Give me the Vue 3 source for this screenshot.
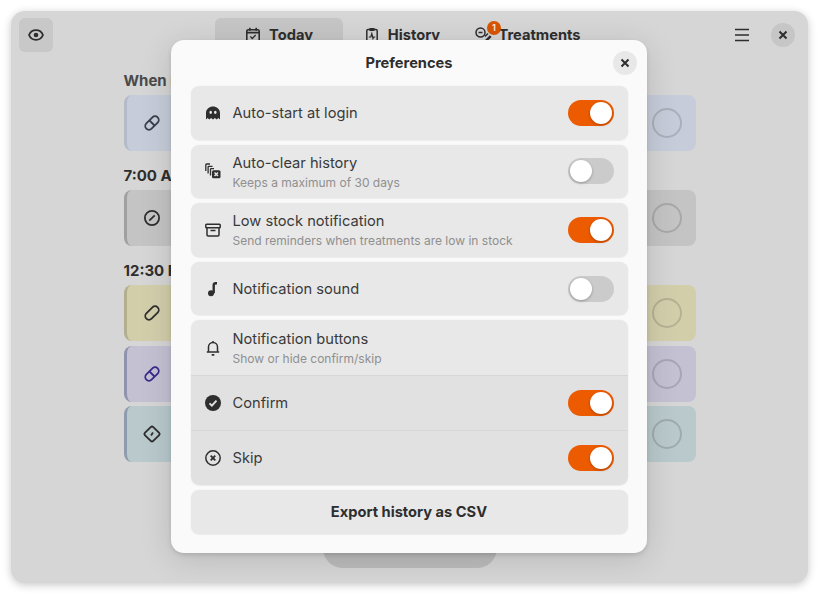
<template>
  <div class="page">
    <div class="window">
      <header class="header">
        <button class="icon-btn eye">
          <svg width="16" height="16" viewBox="0 0 16 16" fill="none">
            <path d="M8 3.2C4.6 3.2 2 5.6 1 8c1 2.4 3.6 4.8 7 4.8s6-2.4 7-4.8c-1-2.4-3.600-4.800-7-4.800z" stroke="#2e2e2e" stroke-width="1.8"/>
            <circle cx="8" cy="8" r="2.300" fill="#2e2e2e"/>
          </svg>
        </button>
        <nav class="tabs">
          <div class="tab active">
            <svg width="16" height="16" viewBox="0 0 16 16" fill="none" stroke="#2e2e2e" stroke-width="1.6">
              <rect x="1.800" y="2.800" width="12.400" height="11.900" rx="1.500"/>
              <path d="M1.800 5.600h12.400M4.800 .8v3M11.200 .8v3"/>
              <path d="M5.300 9.500l2 2 3.400-3.500" stroke-width="1.300"/>
            </svg>
            <span>Today</span>
          </div>
          <div class="tab">
            <svg width="16" height="16" viewBox="0 0 16 16" fill="none" stroke="#2e2e2e" stroke-width="1.500">
              <rect x="2.800" y="2.500" width="10.400" height="12.500" rx="1.300"/>
              <path d="M5.500 1h5v3h-5z" fill="#2e2e2e" stroke="none"/>
              <path d="M4.800 10h2l1-3.500 1.200 5 .8-1.500h1.500" stroke-width="1.200"/>
            </svg>
            <span>History</span>
          </div>
          <div class="tab treat">
            <svg width="20" height="16" viewBox="0 0 20 16" fill="none" stroke="#2e2e2e" stroke-width="1.500">
              <circle cx="5.500" cy="5.500" r="4.500"/>
              <path d="M3.500 5.500h4"/>
              <path d="M10 9.500l3-3M13 12.500l3-3"/>
              <path d="M10.500 14l5-5" stroke-width="2"/>
            </svg>
            <span>Treatments</span>
            <i class="badge">1</i>
          </div>
        </nav>
        <div class="header-right">
          <svg class="menu" width="16" height="16" viewBox="0 0 16 16" fill="none" stroke="#2e2e2e" stroke-width="1.700">
            <path d="M1 2.500h14M1 8h14M1 13.500h14"/>
          </svg>
          <button class="round-btn dark">
            <svg width="10" height="10" viewBox="0 0 10 10" fill="none" stroke="#2e2e2e" stroke-width="2">
              <path d="M1.500 1.500l7 7M8.500 1.500l-7 7"/>
            </svg>
          </button>
        </div>
      </header>

      <main class="list">
        <section v-for="group in groups" :key="group.title" class="group">
          <h3>{{ group.title }}</h3>
          <div class="cards">
            <div v-for="card in group.cards" :key="card.name" class="card" :class="card.tone">
              <svg class="card-icon" width="18" height="18" viewBox="0 0 18 18" fill="none" :stroke="card.stroke" stroke-width="1.800">
                <template v-if="card.icon === 'pill' || card.icon === 'capsule'">
                  <rect x="5.300" y="1" width="7.400" height="16" rx="3.700" transform="rotate(45 9 9)"/>
                  <path v-if="card.icon === 'pill'" d="M6.500 6.500l5 5"/>
                </template>
                <template v-else-if="card.icon === 'ban'">
                  <circle cx="9" cy="9" r="7.100"/>
                  <path d="M11.700 6.300l-5.400 5.400"/>
                </template>
                <template v-else>
                  <rect x="3.200" y="3.200" width="11.600" height="11.600" rx="1.800" transform="rotate(45 9 9)"/>
                  <path d="M10 7.500l-2 3"/>
                </template>
              </svg>
              <div class="card-text">
                <div class="card-name">{{ card.name }}</div>
                <div class="card-sub">{{ card.sub }}</div>
              </div>
              <span class="check"></span>
            </div>
          </div>
        </section>
      </main>

      <div class="fab"></div>

      <div class="dialog">
        <div class="dialog-head">
          <h2>Preferences</h2>
          <button class="round-btn close">
            <svg width="10" height="10" viewBox="0 0 10 10" fill="none" stroke="#2e2e2e" stroke-width="2">
              <path d="M1.500 1.500l7 7M8.500 1.500l-7 7"/>
            </svg>
          </button>
        </div>

        <div class="rows">
          <div v-for="row in rows" :key="row.title" class="row">
            <span class="row-icon" v-html="icons[row.icon]"></span>
            <div class="row-text">
              <div class="row-title">{{ row.title }}</div>
              <div v-if="row.sub" class="row-sub">{{ row.sub }}</div>
            </div>
            <span class="switch" :class="{ on: row.on }"><i></i></span>
          </div>

          <div class="row-group">
            <div class="row plain">
              <span class="row-icon" v-html="icons.bell"></span>
              <div class="row-text">
                <div class="row-title">Notification buttons</div>
                <div class="row-sub">Show or hide confirm/skip</div>
              </div>
            </div>
            <div v-for="row in subRows" :key="row.title" class="row plain sub">
              <span class="row-icon" v-html="icons[row.icon]"></span>
              <div class="row-text">
                <div class="row-title">{{ row.title }}</div>
              </div>
              <span class="switch on"><i></i></span>
            </div>
          </div>

          <button class="export">Export history as CSV</button>
        </div>
      </div>
    </div>
  </div>
</template>

<script setup>
const groups = [
  {
    title: 'When needed',
    cards: [{ name: 'Aspirin', sub: '1 pill', tone: 'blue', icon: 'pill', stroke: '#3a3d4a' }]
  },
  {
    title: '7:00 AM',
    cards: [{ name: 'Ibuprofen', sub: '1 tablet', tone: 'gray', icon: 'ban', stroke: '#2e2e2e' }]
  },
  {
    title: '12:30 PM',
    cards: [
      { name: 'Omega 3', sub: '1 capsule', tone: 'yellow', icon: 'capsule', stroke: '#2e2e2e' },
      { name: 'Vitamin B', sub: '1 pill', tone: 'purple', icon: 'pill', stroke: '#3a2a8c' },
      { name: 'Vitamin C', sub: '1 tablet', tone: 'teal', icon: 'diamond', stroke: '#2e2e2e' }
    ]
  }
]

const rows = [
  { title: 'Auto-start at login', icon: 'ghost', on: true },
  { title: 'Auto-clear history', sub: 'Keeps a maximum of 30 days', icon: 'clear', on: false },
  { title: 'Low stock notification', sub: 'Send reminders when treatments are low in stock', icon: 'archive', on: true },
  { title: 'Notification sound', icon: 'note', on: false }
]

const subRows = [
  { title: 'Confirm', icon: 'check' },
  { title: 'Skip', icon: 'skip' }
]

const icons = {
  ghost: '<svg width="16" height="16" viewBox="0 0 16 16"><path fill="#2e2e2e" fill-rule="evenodd" d="M8 1.500C4.500 1.500 1 4 1 8v6.500l1.600-1.500 1.700 1.500L6.100 13l1.900 1.500L9.900 13l1.800 1.500 1.700-1.500 1.600 1.500V8c0-4-3.500-6.500-7-6.500zM5.700 5.700a1.300 1.600 0 1 0 0 3.200 1.300 1.600 0 0 0 0-3.200zm4.600 0a1.300 1.600 0 1 0 0 3.200 1.300 1.600 0 0 0 0-3.200z"/></svg>',
  clear: '<svg width="16" height="16" viewBox="0 0 16 16" fill="none" stroke="#2e2e2e" stroke-width="1.300"><path d="M5 1H1.500a.7.700 0 0 0-.7.700V8"/><path d="M7.500 3.300H3.800a.7.700 0 0 0-.7.700v6.500"/><path d="M5.500 12.500V6.300c0-.4.300-.7.700-.7H9"/><rect x="7" y="7.300" width="8.500" height="8" rx="1.500" fill="#2e2e2e" stroke="none"/><path d="M9.500 9.500l3.500 3.600M13 9.500l-3.500 3.600" stroke="#e8e8e8" stroke-width="1.400"/></svg>',
  archive: '<svg width="16" height="16" viewBox="0 0 16 16" fill="none" stroke="#2e2e2e" stroke-width="1.500"><rect x=".8" y="2.200" width="14.400" height="3.600" rx=".8"/><path d="M2 5.800v7c0 .7.500 1.200 1.200 1.200h9.600c.7 0 1.200-.5 1.200-1.200v-7"/><path d="M5.500 8.500h5"/></svg>',
  note: '<svg width="16" height="16" viewBox="0 0 16 16"><circle cx="6" cy="12.300" r="3" fill="#2e2e2e"/><path d="M7.500 12.300V4c0-1.800 1.200-3 3-3H12v2.600h-1.200c-.5 0-.9.400-.9.900v7.800z" fill="#2e2e2e"/></svg>',
  bell: '<svg width="16" height="16" viewBox="0 0 16 16" fill="none" stroke="#2e2e2e" stroke-width="1.500"><path d="M3.500 11.700V7a4.500 4.500 0 0 1 9 0v4.700"/><path d="M1.800 12h12.400"/><path d="M8 1v1.500"/><path d="M6.700 14.800h2.600" stroke-width="1.700"/></svg>',
  check: '<svg width="16" height="16" viewBox="0 0 16 16"><circle cx="8" cy="8" r="8" fill="#2e2e2e"/><path d="M4.500 8.300l2.400 2.400 4.600-5" fill="none" stroke="#e2e2e2" stroke-width="1.900"/></svg>',
  skip: '<svg width="16" height="16" viewBox="0 0 16 16" fill="none" stroke="#2e2e2e"><circle cx="8" cy="8" r="7.200" stroke-width="1.500"/><path d="M5.700 5.700l4.600 4.600M10.300 5.700l-4.600 4.600" stroke-width="1.800"/></svg>'
}
</script>

<style scoped>
.page {
  width: 819px;
  height: 595px;
  padding: 11px;
  box-sizing: border-box;
  background: #fff;
  font-family: Inter, "Liberation Sans", sans-serif;
  color: #2e2e2e;
  overflow: hidden;
}

.window {
  position: relative;
  width: 797px;
  height: 572px;
  background: #d6d6d6;
  border-radius: 14px;
  box-shadow: 0 2px 8px rgba(0, 0, 0, 0.22);
  overflow: hidden;
}

button {
  border: 0;
  padding: 0;
  font: inherit;
  color: inherit;
  display: flex;
  align-items: center;
  justify-content: center;
}

.header {
  height: 48px;
  display: flex;
  align-items: flex-start;
  padding: 7px 13px 0 8px;
  box-sizing: border-box;
}

.icon-btn.eye {
  width: 34px;
  height: 34px;
  border-radius: 6px;
  background: #c8c8c8;
}

.tabs {
  display: flex;
  margin-left: 162px;
}

.tab {
  position: relative;
  height: 34px;
  display: flex;
  align-items: center;
  justify-content: center;
  gap: 8px;
  font-size: 14.67px;
  font-weight: 700;
  border-radius: 6px;
  width: 128px;
}

.tab.active {
  background: #c6c6c6;
  margin-right: 0;
}

.tab:nth-child(2) {
  width: 132px;
  padding-right: 14px;
  box-sizing: border-box;
}

.tab.treat {
  gap: 3px;
  width: 128px;
  margin-left: -11px;
}

.badge {
  position: absolute;
  left: 23px;
  top: 3px;
  width: 14px;
  height: 14px;
  border-radius: 50%;
  background: #d95400;
  color: #f5e6da;
  font-size: 9px;
  font-style: normal;
  line-height: 14px;
  text-align: center;
}

.header-right {
  margin-left: auto;
  display: flex;
  align-items: center;
  gap: 21px;
  height: 34px;
}

.round-btn {
  width: 24px;
  height: 24px;
  border-radius: 50%;
}

.round-btn.dark {
  background: #c6c6c6;
}

.list {
  width: 572px;
  margin: 0 auto;
  padding-top: 11px;
  display: flex;
  flex-direction: column;
  gap: 14px;
}

.group h3 {
  margin: 0 0 3px;
  height: 22px;
  line-height: 22px;
  font-size: 15px;
  font-weight: 700;
  color: #4a4a4a;
}

.group:not(:first-child) h3 {
  color: #2e2e2e;
}

.cards {
  display: flex;
  flex-direction: column;
  gap: 4.500px;
}

.card {
  height: 56px;
  box-sizing: border-box;
  display: flex;
  align-items: center;
  border-radius: 8px;
  border-left: 3px solid;
  padding: 0 14px 0 16px;
}

.card.blue { background: #c6ccd9; border-color: #b4bac8; }
.card.gray { background: #c4c4c4; border-color: #a0a0a0; }
.card.yellow { background: #d3ceaa; border-color: #b3ae8d; }
.card.purple { background: #c4c1d3; border-color: #8f93ad; }
.card.teal { background: #b9c9cc; border-color: #8f9cae; }

.card-icon {
  flex: none;
}

.card-text {
  margin-left: 13px;
  font-size: 13px;
}

.card-sub {
  font-size: 11px;
  color: #666;
}

.check {
  margin-left: auto;
  width: 26px;
  height: 26px;
  border-radius: 50%;
  border: 2px solid rgba(0, 0, 0, 0.14);
}

.fab {
  position: absolute;
  left: 312px;
  bottom: 15px;
  width: 174px;
  height: 60px;
  border-radius: 20px;
  background: #bcbcbc;
}

.dialog {
  position: absolute;
  left: 160px;
  top: 29px;
  width: 476px;
  height: 513px;
  box-sizing: border-box;
  padding: 0 19.500px;
  background: #fafafa;
  border-radius: 13px;
  box-shadow: 0 2px 4px rgba(0, 0, 0, 0.12), 0 6px 32px rgba(0, 0, 0, 0.14);
}

.dialog-head {
  position: relative;
  height: 46px;
  display: flex;
  align-items: center;
  justify-content: center;
}

.dialog-head h2 {
  margin: 0;
  font-size: 14.67px;
  font-weight: 700;
  padding-top: 0;
}

.round-btn.close {
  position: absolute;
  right: -9px;
  top: 10.500px;
  background: #e8e8e8;
}

.rows {
  display: flex;
  flex-direction: column;
  gap: 5px;
}

.row {
  height: 53.600px;
  box-sizing: border-box;
  display: flex;
  align-items: center;
  padding: 0 14px;
  background: #e8e8e8;
  border-radius: 8px;
  box-shadow: 0 0 0 1px rgba(0, 0, 0, 0.015), 0 1px 1px rgba(0, 0, 0, 0.04);
}

.row-icon {
  width: 16px;
  height: 16px;
  flex: none;
  display: flex;
}

.row-text {
  margin-left: 12px;
}

.row-title {
  font-size: 14.67px;
  line-height: 20px;
  color: #3a3a3a;
}

.row-sub {
  font-size: 12px;
  line-height: 15px;
  margin-top: 2px;
  color: #8f8f8f;
}

.switch {
  margin-left: auto;
  width: 46px;
  height: 26px;
  padding: 2px;
  box-sizing: border-box;
  border-radius: 13px;
  background: #cbcbcb;
  display: flex;
}

.switch i {
  width: 22px;
  height: 22px;
  border-radius: 50%;
  background: #fff;
  box-shadow: 0 1px 3px rgba(0, 0, 0, 0.28);
}

.switch.on {
  background: #ed5b00;
  justify-content: flex-end;
}

.row-group {
  border-radius: 8px;
  overflow: hidden;
  box-shadow: 0 0 0 1px rgba(0, 0, 0, 0.015), 0 1px 1px rgba(0, 0, 0, 0.04);
}

.row.plain {
  border-radius: 0;
  box-shadow: none;
  height: 54.500px;
}

.row.sub {
  height: 55px;
  background: #e1e1e1;
  border-top: 1px solid #d7d7d7;
}

.export {
  width: 100%;
  height: 44px;
  background: #e8e8e8;
  border-radius: 8px;
  font-size: 14.67px;
  font-weight: 700;
  color: #2e2e2e;
  box-shadow: 0 0 0 1px rgba(0, 0, 0, 0.015), 0 1px 1px rgba(0, 0, 0, 0.04);
}
</style>
